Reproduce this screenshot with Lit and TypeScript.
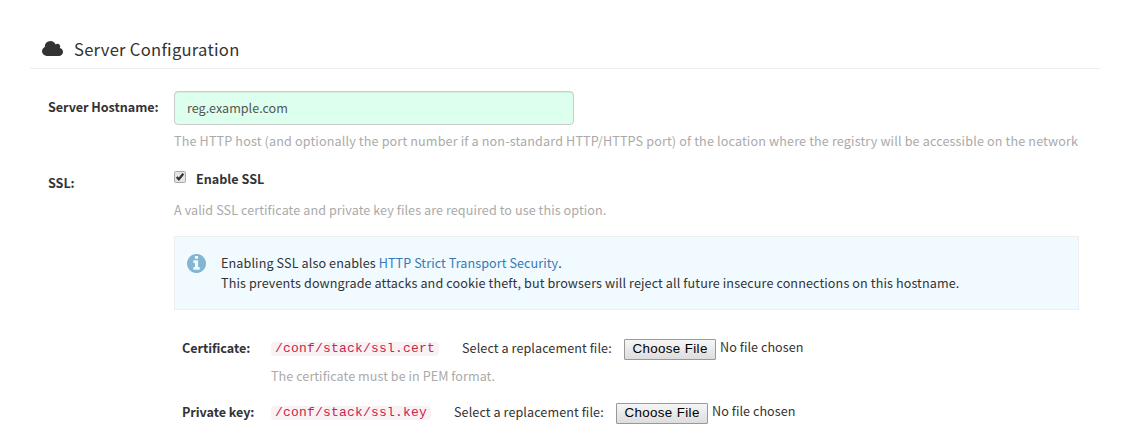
import { LitElement, html, css } from "lit";
import { customElement } from "lit/decorators.js";

@customElement("app-root")
class AppRoot extends LitElement {
  static styles = css`
    :host { display: block; height: 448px; box-sizing: border-box; padding: 30px; background: #fff; overflow: hidden;
      font: 12.6px/20px "Noto Sans CJK SC", "Noto Sans", sans-serif; letter-spacing: 0.108px; color: #333; white-space: nowrap; }
    .head { display: flex; align-items: center; height: 38px; padding-left: 12px; border-bottom: 1px solid #eee; font-size: 16.6px; letter-spacing: 0.27px; }
    .cloud { width: 21px; height: 15px; margin: -2px 11px 0 0; fill: #333; }
    .form { display: grid; grid-template-columns: 126px 905px; padding: 22px 0 0 18px; }
    .label { font-weight: bold; letter-spacing: -0.05px; }
    .enable .label { letter-spacing: 0; }
    .host-label { padding-top: 6px; }
    .ssl-label { padding-top: 22px; }
    .host { display: flex; align-items: center; box-sizing: border-box; width: 400px; height: 34px; padding: 0 12px;
      border: 1px solid #ccc; border-radius: 4px; background: #dfe; color: #555; letter-spacing: 0; box-shadow: inset 0 1px 1px rgba(0,0,0,.075); }
    .help { color: #aaa; }
    .host-help { padding-top: 6px; letter-spacing: 0.145px; }
    .enable { display: flex; align-items: flex-start; padding-top: 18px; }
    .check { width: 12px; height: 12px; margin: 2px 10px 0 0; }
    .ssl-help { padding-top: 11px; letter-spacing: 0.08px; }
    .info { display: flex; box-sizing: border-box; height: 74px; margin-top: 16px; padding: 16px 12px; border: 1px solid #eee; background: #f0faff; }
    .info svg { width: 19px; height: 19px; margin: 1px 15px 0 0; fill: #82b6d2; }
    .link { color: #337ab7; letter-spacing: 0.07px; }
    .files { display: grid; grid-template-columns: 89px auto; padding: 28px 0 0 8px; }
    .file { display: flex; height: 20px; align-items: flex-start; }
    .code { font-family: "Liberation Mono", monospace; font-size: 13px; line-height: 14px; letter-spacing: 0.2px; color: #c7254e;
      background: #f9f2f4; border-radius: 4px; padding: 0 4px; margin: 4px 23px 0 0; }
    .select { margin-right: 12px; letter-spacing: 0.08px; width: 150px; }
    .button { box-sizing: border-box; width: 92px; height: 21px; margin: 1px 4px 0 0; border: 1px solid #999; border-radius: 1px;
      background: linear-gradient(#f6f6f6, #ddd); color: #000; font: 13.33px/18px "Liberation Sans", sans-serif; letter-spacing: 0.38px; text-align: center; }
    .none { margin-top: -1px; letter-spacing: 0.05px; }
    .cert-help { grid-column: 2; padding: 8px 0 16px; letter-spacing: 0.05px; }
  `;

  fileRow(label: string, path: string) {
    return html`<div class="label">${label}</div>
      <div class="file"><span class="code">${path}</span><span class="select">Select a replacement file:</span><span class="button">Choose File</span><span class="none">No file chosen</span></div>`;
  }

  render() {
    return html`
      <div class="head">
        <svg class="cloud" viewBox="64 128 1920 1408" preserveAspectRatio="none"><path d="M1984 1152q0 159-112.5 271.5t-271.5 112.5h-1088q-185 0-316.5-131.5t-131.5-316.5q0-132 71-241.5t187-163.5q-2-28-2-43 0-212 150-362t362-150q158 0 286.5 88t187.5 230q70-62 166-62 106 0 181 75t75 181q0 75-41 138 129 30 213 134.5t84 239.5z"/></svg>
        <span>Server Configuration</span>
      </div>
      <div class="form">
        <div class="label host-label">Server Hostname:</div>
        <div>
          <div class="host">reg.example.com</div>
          <div class="help host-help">The HTTP host (and optionally the port number if a non-standard HTTP/HTTPS port) of the location where the registry will be accessible on the network</div>
        </div>
        <div class="label ssl-label">SSL:</div>
        <div>
          <div class="enable">
            <svg class="check" viewBox="0 0 12 12"><rect x=".5" y=".5" width="11" height="11" rx="1.5" fill="#e6e6e6" stroke="#aaa"/><path d="M2.7 6 4.8 8.3 9.3 2.8" fill="none" stroke="#333" stroke-width="2.2"/></svg>
            <span class="label">Enable SSL</span>
          </div>
          <div class="help ssl-help">A valid SSL certificate and private key files are required to use this option.</div>
          <div class="info">
            <svg viewBox="128 128 1536 1536"><path d="M1152 1376v-160q0-14-9-23t-23-9h-96v-512q0-14-9-23t-23-9h-320q-14 0-23 9t-9 23v160q0 14 9 23t23 9h96v320h-96q-14 0-23 9t-9 23v160q0 14 9 23t23 9h448q14 0 23-9t9-23zm-128-896v-160q0-14-9-23t-23-9h-192q-14 0-23 9t-9 23v160q0 14 9 23t23 9h192q14 0 23-9t9-23zm640 416q0 209-103 385.5t-279.5 279.5-385.5 103-385.5-103-279.5-279.5-103-385.5 103-385.5 279.5-279.5 385.5-103 385.5 103 279.5 279.5 103 385.5z"/></svg>
            <div>Enabling SSL also enables <span class="link">HTTP Strict Transport Security</span>.<br>This prevents downgrade attacks and cookie theft, but browsers will reject all future insecure connections on this hostname.</div>
          </div>
          <div class="files">
            ${this.fileRow("Certificate:", "/conf/stack/ssl.cert")}
            <div class="help cert-help">The certificate must be in PEM format.</div>
            ${this.fileRow("Private key:", "/conf/stack/ssl.key")}
          </div>
        </div>
      </div>`;
  }
}
